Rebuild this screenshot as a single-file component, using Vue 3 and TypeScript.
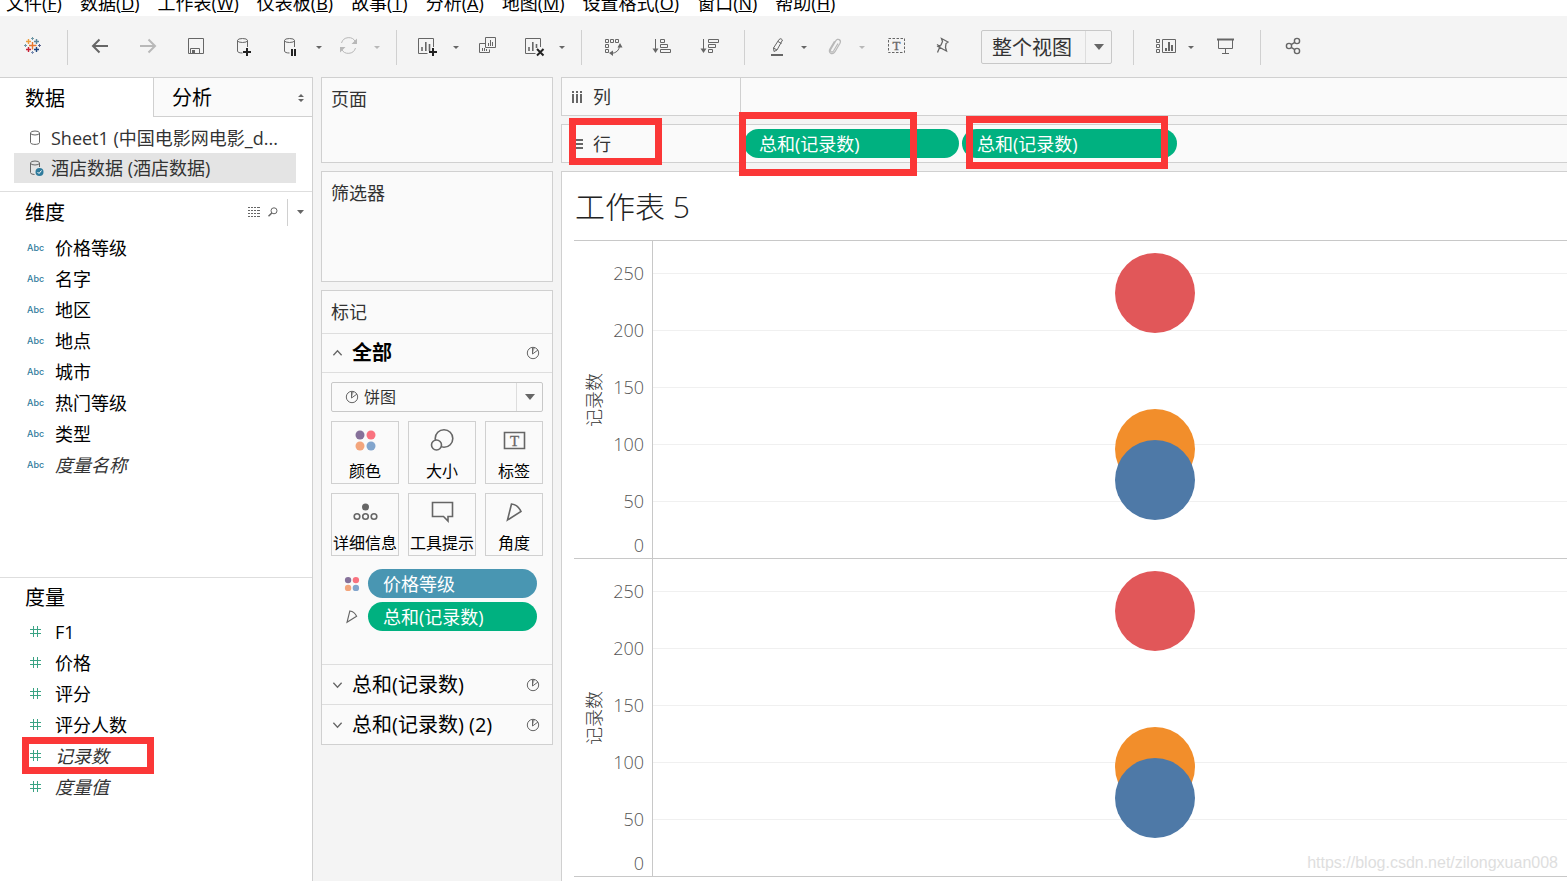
<script setup lang="ts">
import { ref } from 'vue'

interface Tool {
  icon: string
  label: string
  size: string
  menu?: boolean
  muted?: boolean
}

interface Field {
  name: string
  italic?: boolean
  marked?: boolean
}

const menus: [string, string][] = [
  ['文件', 'F'], ['数据', 'D'], ['工作表', 'W'], ['仪表板', 'B'], ['故事', 'T'],
  ['分析', 'A'], ['地图', 'M'], ['设置格式', 'O'], ['窗口', 'N'], ['帮助', 'H'],
]

const icons: Record<string, string> = {
  logo: `<g stroke-width="1.4"><path stroke="#e8762d" d="M15.500 7v7.500M12 10.500h7.500"/>
    <path stroke="#eb9c3c" d="M11.500 4v5M9 6.500h5"/><path stroke="#5b879b" d="M19.500 4v5M17 6.500h5"/>
    <path stroke="#c72035" d="M11.500 12v5M9 14.500h5"/><path stroke="#1f457e" d="M19.500 12v5M17 14.500h5"/></g>
    <g stroke-width="1"><path stroke="#7199a6" d="M15.500 2v3M14 3.500h3M8.500 9v3M7 10.500h3"/>
    <path stroke="#5c6692" d="M22.500 9v3M21 10.500h3"/><path stroke="#7b8fb3" d="M15.500 16v3M14 17.500h3"/></g>`,
  back: '<path stroke-width="2" d="M23 11H8M14.500 4.500 8 11l6.500 6.500"/>',
  forward: '<path stroke-width="2" d="M7 11h15M15.500 4.500 22 11l-6.500 6.500"/>',
  save: '<path d="M7.500 3.500h15v15h-15zM9.500 18.500v-5h9v5"/><path fill="currentColor" stroke="none" d="M11 15h3v3h-3z"/>',
  addData: `<path d="M8.500 5.500v10.500c0 1.300 2 2 5 2M18.500 5.500V12"/><ellipse cx="13.500" cy="5.500" rx="5" ry="2"/>
    <path stroke="#222" stroke-width="2" d="M18 13v8M14 17h8"/>`,
  pauseData: `<path d="M9.500 5.500v10.500c0 1.300 2 2 5 2M19.500 5.500V12"/><ellipse cx="14.500" cy="5.500" rx="5" ry="2"/>
    <path stroke="#222" stroke-width="2" d="M17 14v7M20 14v7"/>`,
  refresh: `<path d="M8.500 8a7.500 7.500 0 0 1 14-1M22.500 13a7.500 7.500 0 0 1-14 1"/>
    <path fill="currentColor" stroke="none" d="M24 3.500V9h-5.500zM7 17.500V12h5.500z"/>`,
  addSheet: `<path d="M21.500 12V3.500h-15v15h9"/><path stroke-width="1.600" d="M10 12v4M13.800 7v9M17.500 9v7"/>
    <path stroke="#222" stroke-width="2" d="M21 13v8M17 17h8"/>`,
  copySheet: `<path d="M13.500 2.500h10v10h-10zM13.500 8.500h-6v9h10v-3"/>
    <path d="M16.500 8v3M18.500 5v6M20.500 7v4M10.500 13v3M12.500 13v3M14.500 14v2"/>`,
  clearSheet: `<path d="M22.500 12V3.500h-15v15h10"/><path stroke-width="1.600" d="M11 12v4M14.800 7v9M18.500 9v4"/>
    <path stroke="#222" stroke-width="2" d="m19 14 6.500 6.500M25.500 14 19 20.500"/>`,
  swap: `<path d="M6.500 4.500h3v3h-3zM11.500 4.500h3v3h-3zM16.500 4.500h3v3h-3zM6.500 9.500h3v3h-3zM6.500 14.500h3v3h-3zM20.500 11q-.5 6.500-8 7.500"/>
    <path fill="currentColor" stroke="none" d="m21 8 2.500 4.500h-5zM10 18l4-2.500V21z"/>`,
  sortUp: `<path d="M8.500 4v11M13.500 4.500h4v3h-4zM13.500 9.500h7v3h-7zM13.500 14.500h10v3h-10z"/>
    <path fill="currentColor" stroke="none" d="M5.500 13.500h6L8.500 18z"/>`,
  sortDown: `<path d="M8.500 4v11M13.500 4.500h10v3h-10zM13.500 9.500h7v3h-7zM13.500 14.500h4v3h-4z"/>
    <path fill="currentColor" stroke="none" d="M5.500 13.500h6L8.500 18z"/>`,
  pen: `<path d="M11.500 13 17 4.500q2-2 3.500.5l-5.500 10-3 1.500zM11.500 13l3.500 2M16 6.500l3.500 2"/>
    <path stroke-width="2" d="M9 20h12"/>`,
  clip: `<path stroke-width="1.200" d="m20 8.500-4.500 7.500c-1.400 2-4 .600-2.800-1.600l5-8.500c1.800-3.300 6-.900 4.300 2.300l-5 8.500c-2.600 4-7.500 1-5-3l4.500-7.500"/>`,
  label: `<path stroke-dasharray="2.500 1.500" d="M8.500 3.500h16v14h-16z"/>
    <text x="16.500" y="15" text-anchor="middle" font-family="Liberation Serif, serif" font-size="13" fill="currentColor" stroke="currentColor" stroke-width=".3">T</text>`,
  pin: `<path stroke-width="1.300" d="m15.500 3.500 6.500 3.500-2 1.500-.500 4 1 3.500-8.500-4.500 3-1.500 1.500-3.500zM11 9.500l3 2-2.500 6"/>`,
  showMe: `<path d="M7.500 4.500h3v3h-3zM7.500 9.500h3v3h-3zM7.500 14.500h3v3h-3zM13.500 4.500h13v13h-13z"/>
    <path stroke-width="2" d="M17 13v3M20 7v9M23 10v6"/>`,
  present: '<path stroke-width="2" d="M8 4.500h17"/><path d="M9.500 5v8.500h14V5M16.500 13.500v5M13 18.500h7"/>',
  share: `<g stroke-width="1.400"><circle cx="11" cy="11" r="2.600"/><circle cx="19" cy="6" r="2.600"/>
    <circle cx="19" cy="16" r="2.600"/><path d="m13.200 9.700 3.600-2.300M13.200 12.300l3.600 2.300"/></g>`,
}

const groups: { kind: string; tools: Tool[]; fit?: boolean }[] = [
  { kind: 'brand', tools: [{ icon: 'logo', label: '开始页面', size: 'l' }] },
  {
    kind: 'wide',
    tools: [
      { icon: 'back', label: '撤消', size: 'l' },
      { icon: 'forward', label: '重做', size: 'l', muted: true },
      { icon: 'save', label: '保存', size: 'l' },
      { icon: 'addData', label: '新建数据源', size: 'l' },
      { icon: 'pauseData', label: '暂停自动更新', size: 'm', menu: true },
      { icon: 'refresh', label: '运行更新', size: 'm', menu: true, muted: true },
    ],
  },
  {
    kind: 'wide',
    tools: [
      { icon: 'addSheet', label: '新建工作表', size: 'm', menu: true },
      { icon: 'copySheet', label: '复制', size: 'l' },
      { icon: 'clearSheet', label: '清除工作表', size: 'm', menu: true },
    ],
  },
  {
    kind: 'sort',
    tools: [
      { icon: 'swap', label: '交换行和列', size: 'l' },
      { icon: 'sortUp', label: '升序排序', size: 'l' },
      { icon: 'sortDown', label: '降序排序', size: 'l' },
    ],
  },
  {
    kind: 'format',
    fit: true,
    tools: [
      { icon: 'pen', label: '突出显示', size: 's', menu: true },
      { icon: 'clip', label: '组成员', size: 'm', menu: true, muted: true },
      { icon: 'label', label: '显示标记标签', size: 'xl' },
      { icon: 'pin', label: '固定轴', size: 's' },
    ],
  },
  {
    kind: 'show',
    tools: [
      { icon: 'showMe', label: '显示卡', size: 's', menu: true },
      { icon: 'present', label: '演示模式', size: 'xl' },
    ],
  },
  { kind: 'last', tools: [{ icon: 'share', label: '共享', size: 'l' }] },
]

const dimensions: Field[] = [
  { name: '价格等级' }, { name: '名字' }, { name: '地区' }, { name: '地点' },
  { name: '城市' }, { name: '热门等级' }, { name: '类型' }, { name: '度量名称', italic: true },
]
const measures: Field[] = [
  { name: 'F1' }, { name: '价格' }, { name: '评分' }, { name: '评分人数' },
  { name: '记录数', italic: true, marked: true }, { name: '度量值', italic: true },
]

const dots = `<g stroke="none"><circle cx="10" cy="7" r="4.500" fill="#86719a"/><circle cx="21" cy="7" r="4.500" fill="#f9727f"/>
  <circle cx="10" cy="18" r="4.500" fill="#f3a57c"/><circle cx="21" cy="18" r="4.500" fill="#82a5cd"/></g>`
const wedge = '<path d="m12.500 4-4 16 13.500-8.500C20 7 17 4.500 12.500 4z"/>'

const markButtons = [
  { label: '颜色', art: dots },
  { label: '大小', art: '<circle cx="17" cy="10.500" r="8.800"/><circle cx="9.500" cy="17" r="5" fill="#fafafa"/>' },
  { label: '标签', art: '<path d="M5.500 4.500h20v16h-20z"/><text x="15.500" y="17.500" text-anchor="middle" font-family="Liberation Serif, serif" font-size="15" fill="#666" stroke="#666" stroke-width=".3">T</text>' },
  { label: '详细信息', art: '<circle cx="15.500" cy="7" r="3.500" fill="#666" stroke="none"/><circle cx="7" cy="16.500" r="2.800"/><circle cx="15.500" cy="16.500" r="2.800"/><circle cx="24" cy="16.500" r="2.800"/>' },
  { label: '工具提示', art: '<path d="M5.500 2.500h20v14H21v4.500L16.500 16.500h-11z"/>' },
  { label: '角度', art: wedge },
]

const axisMax = 278
const ticks = [250, 200, 150, 100, 50, 0]
const marks = [
  { value: 232, tone: 'red' },
  { value: 96, tone: 'orange' },
  { value: 68, tone: 'blue' },
]
const at = (v: number) => ({ bottom: `${(v / axisMax) * 100}%` })

const fit = ref('整个视图')
const markType = ref('饼图')
const pie = '<circle cx="7" cy="7" r="5.700"/><path fill="#aaa" d="M6.500 8V2L9 1.500M6.500 8l5.500-4"/>'
</script>

<template>
  <div class="app">
    <nav class="menubar">
      <a v-for="[name, key] in menus" :key="key" href="#">{{ name }}(<u>{{ key }}</u>)</a>
    </nav>

    <header class="toolbar">
      <div v-for="g in groups" :key="g.tools[0].icon" class="group" :class="g.kind">
        <template v-for="t in g.tools" :key="t.icon">
          <button class="tool" :class="[t.size, { muted: t.muted }]" :aria-label="t.label">
            <svg class="ico" viewBox="0 0 30 25" v-html="icons[t.icon]" />
          </button>
          <button v-if="t.menu" class="drop" :class="{ muted: t.muted }" :aria-label="t.label + '选项'">
            <svg viewBox="0 0 6 3"><path d="M0 0h6L3 3z" /></svg>
          </button>
        </template>
        <div v-if="g.fit" class="combo fit">
          <select v-model="fit" aria-label="适合">
            <option>整个视图</option>
          </select>
          <span class="arrow"><svg viewBox="0 0 10 6"><path d="M0 0h10L5 6z" /></svg></span>
        </div>
      </div>
    </header>

    <main class="workspace">
      <aside class="data">
        <div class="tabs">
          <button class="tab active">数据</button>
          <button class="tab">
            分析
            <svg viewBox="0 0 6 8"><path d="M0 3h6L3 0zM0 5h6L3 8z" /></svg>
          </button>
        </div>
        <ul class="sources">
          <li>
            <svg viewBox="0 0 16 16"><path d="M2.500 3v9.500c0 2.500 9 2.500 9 0V3" /><ellipse cx="7" cy="3" rx="4.500" ry="2" /></svg>
            Sheet1 (中国电影网电影_d...
          </li>
          <li class="current">
            <svg viewBox="0 0 16 16">
              <path d="M2.500 3v9.500q0 2 4 2M11.500 3v4" /><ellipse cx="7" cy="3" rx="4.500" ry="2" />
              <circle class="badge" cx="11.500" cy="12" r="4" /><path class="tick" d="m9.500 12 1.500 1.500 2.500-3" />
            </svg>
            酒店数据 (酒店数据)
          </li>
        </ul>

        <section class="fields">
          <div class="fields-head">
            <h2>维度</h2>
            <button class="mini" aria-label="查看数据">
              <svg width="12" height="10" viewBox="0 0 12 10"><path d="M0 .5h2M3 .5h2M6 .5h2M9 .5h3M0 3.500h2M3 3.500h2M6 3.500h2M9 3.500h3M0 6.500h2M3 6.500h2M6 6.500h2M9 6.500h3M0 9.500h2M3 9.500h2M6 9.500h2M9 9.500h3" /></svg>
            </button>
            <button class="mini" aria-label="查找字段">
              <svg width="10" height="10" viewBox="0 0 10 10"><circle cx="6" cy="3.800" r="3" /><path d="M3.800 6 .5 9.300" stroke-width="1.500" /></svg>
            </button>
            <button class="mini more" aria-label="更多">
              <svg class="solid" width="7" height="4" viewBox="0 0 7 4"><path d="M0 0h7L3.500 4z" /></svg>
            </button>
          </div>
          <ul>
            <li v-for="f in dimensions" :key="f.name" :class="{ italic: f.italic }"><span class="abc">Abc</span>{{ f.name }}</li>
          </ul>
        </section>

        <section class="fields">
          <div class="fields-head short"><h2>度量</h2></div>
          <ul>
            <li v-for="f in measures" :key="f.name" :class="{ italic: f.italic }">
              <span class="abc"><svg width="11" height="11" viewBox="0 0 11 11"><path d="M3.500 0v11M7.500 0v11M0 3.500h11M0 7.500h11" /></svg></span>{{ f.name }}
              <span v-if="f.marked" class="frame frame-field" />
            </li>
          </ul>
        </section>
      </aside>

      <div class="cards">
        <section class="card pages"><h3>页面</h3></section>
        <section class="card filters"><h3>筛选器</h3></section>
        <section class="card marks">
          <h3>标记</h3>
          <button class="layer all">
            <svg class="chev" viewBox="0 0 12 8"><path d="m1.500 6.500 4.500-5 4.500 5" /></svg>
            <span>全部</span>
            <svg class="pie" viewBox="0 0 14 14" v-html="pie" />
          </button>
          <div class="layer-body">
            <div class="combo type">
              <svg class="pie" viewBox="0 0 14 14" v-html="pie" />
              <select v-model="markType" aria-label="标记类型">
                <option>饼图</option>
              </select>
              <span class="arrow"><svg viewBox="0 0 10 6"><path d="M0 0h10L5 6z" /></svg></span>
            </div>
            <div class="mark-grid">
              <button v-for="b in markButtons" :key="b.label">
                <svg viewBox="0 0 31 25" v-html="b.art" />
                <span>{{ b.label }}</span>
              </button>
            </div>
            <div class="encodings">
              <svg viewBox="0 0 31 25" v-html="dots" />
              <button class="pill dimension">价格等级</button>
              <svg viewBox="0 0 31 25" v-html="wedge" />
              <button class="pill">总和(记录数)</button>
            </div>
          </div>
          <button v-for="l in ['总和(记录数)', '总和(记录数) (2)']" :key="l" class="layer">
            <svg class="chev" viewBox="0 0 12 8"><path d="m1.500 1.500 4.500 5 4.500-5" /></svg>
            <span>{{ l }}</span>
            <svg class="pie" viewBox="0 0 14 14" v-html="pie" />
          </button>
        </section>
      </div>

      <div class="sheet">
        <div class="shelf">
          <div class="shelf-name">
            <svg viewBox="0 0 12 12"><path d="M2 0v2M6 0v2M10 0v2M2 3v9M6 3v9M10 3v9" /></svg>列
          </div>
        </div>
        <div class="shelf">
          <div class="shelf-name">
            <svg viewBox="0 0 12 12"><path d="M0 2h2M0 6h2M0 10h2M3 2h9M3 6h9M3 10h9" /></svg>行
          </div>
          <div class="pills">
            <button class="pill">总和(记录数)</button>
            <button class="pill">总和(记录数)</button>
          </div>
          <span class="frame frame-rows" />
          <span class="frame frame-first" />
          <span class="frame frame-second" />
        </div>
        <section class="view">
          <h1>工作表 5</h1>
          <div class="chart">
            <div v-for="p in 2" :key="p" class="pane">
              <div class="axis">
                <span class="axis-title">记录数</span>
                <span v-for="t in ticks" :key="t" class="tick-label" :class="{ zero: t === 0 }" :style="at(t)">{{ t }}</span>
              </div>
              <div class="plot">
                <i v-for="t in ticks.slice(0, 5)" :key="t" class="grid-line" :style="at(t)" />
                <i v-for="m in marks" :key="m.tone" class="mark" :class="m.tone" :style="at(m.value)" />
              </div>
            </div>
          </div>
          <a class="source-link" href="#">https://blog.csdn.net/zilongxuan008</a>
        </section>
      </div>
    </main>
  </div>
</template>

<style>
body {
  margin: 0;
}
</style>

<style scoped>
.app {
  display: flex;
  flex-direction: column;
  min-height: 100vh;
  background: #f4f4f4;
  color: #000;
  font: 18px/24px "Open Sans", "Noto Sans CJK SC", sans-serif;
}
.app * {
  box-sizing: border-box;
}
button, select {
  font: inherit;
  color: inherit;
  border: 0;
  padding: 0;
  margin: 0;
  background: none;
}
ul, h1, h2, h3 {
  margin: 0;
  padding: 0;
  list-style: none;
  font-weight: 400;
}
svg {
  display: block;
  flex: none;
  fill: none;
  stroke: #666;
}

.menubar {
  display: flex;
  align-items: flex-end;
  gap: 18px;
  height: 16px;
  padding: 0 6px;
  overflow: hidden;
  background: #fff;
  line-height: 26px;
}
.menubar a {
  color: #000;
  text-decoration: none;
  white-space: nowrap;
}

.toolbar {
  display: flex;
  padding: 14px 0 12px;
  color: #666;
}
.group {
  display: flex;
  height: 35px;
  border-right: 1px solid #d0d0d0;
}
.brand {
  padding: 0 11px 0 8px;
}
.wide {
  padding: 0 12px 0 8px;
}
.sort {
  padding: 0 10px 0 8px;
}
.format {
  padding: 0 21px 0 12px;
}
.show {
  padding: 0 10px;
}
.last {
  padding: 0 8px;
  border: 0;
}
.tool {
  display: flex;
  align-items: center;
  justify-content: center;
}
.s { width: 40px; }
.m { width: 44px; }
.l { width: 48px; }
.xl { width: 52px; }
.ico {
  width: 30px;
  height: 25px;
  stroke: currentColor;
}
.drop {
  width: 14px;
  display: flex;
  align-items: center;
  justify-content: center;
}
.drop svg {
  width: 6px;
  height: 3px;
  fill: currentColor;
  stroke: none;
}
.muted {
  color: #b8b8b8;
}

.combo {
  position: relative;
  border: 1px solid #c8c8c8;
  border-radius: 2px;
  color: #333;
}
.combo select {
  width: 100%;
  height: 100%;
  appearance: none;
  outline: 0;
}
.arrow {
  position: absolute;
  top: 0;
  right: 0;
  bottom: 0;
  width: 26px;
  border-left: 1px solid #ddd;
  display: flex;
  align-items: center;
  justify-content: center;
  pointer-events: none;
}
.arrow svg {
  width: 10px;
  height: 6px;
  fill: #666;
  stroke: none;
}
.fit {
  width: 131px;
  height: 34px;
  margin-left: 20px;
  font-size: 20px;
}
.fit select {
  padding: 2px 0 0 10px;
}

.workspace {
  flex: 1;
  display: grid;
  grid-template-columns: 313px 232px minmax(0, 1fr);
  gap: 8px;
}

.data {
  display: grid;
  grid-template-rows: auto auto 386fr 304fr;
  background: #fff;
  border: solid #d0d0d0;
  border-width: 1px 1px 0 0;
}
.tabs {
  display: flex;
  font-size: 20px;
}
.tab {
  flex: 1;
  height: 39px;
  padding: 2px 8px 0 18px;
  display: flex;
  align-items: center;
  justify-content: space-between;
  background: #fafafa;
  border: solid #d0d0d0;
  border-width: 0 0 1px 1px;
}
.tab.active {
  flex: 0 0 153px;
  padding-left: 25px;
  background: #fff;
  border: 0;
}
.tab svg {
  width: 6px;
  height: 8px;
  fill: #666;
  stroke: none;
}
.sources {
  padding: 6px 16px 8px 14px;
  color: #333;
}
.sources li {
  display: flex;
  align-items: center;
  gap: 7px;
  height: 30px;
  padding-left: 14px;
  white-space: nowrap;
}
.sources svg {
  width: 16px;
  height: 16px;
}
.sources .current {
  background: #e4e4e4;
}
.badge {
  fill: #2f7b9c;
  stroke: none;
}
.tick {
  stroke: #fff;
}
.fields {
  border-top: 1px solid #dedede;
}
.fields-head {
  display: flex;
  align-items: center;
  height: 40px;
  padding-left: 25px;
}
.fields-head.short {
  height: 38px;
}
.fields-head h2 {
  flex: 1;
  padding-top: 2px;
  font-size: 20px;
}
.mini {
  height: 27px;
  padding: 0 4px;
  display: flex;
  align-items: center;
}
.mini.more {
  margin-left: 5px;
  padding: 0 8px 0 9px;
  border-left: 1px solid #d0d0d0;
}
.mini .solid {
  fill: #666;
  stroke: none;
}
.fields li {
  position: relative;
  display: flex;
  align-items: center;
  height: 31px;
  line-height: 22px;
}
.italic {
  font-style: italic;
  color: #333;
}
.abc {
  width: 55px;
  padding-left: 27px;
  color: #2f7b9c;
  font: 500 9px/12px Inter, sans-serif;
}
.abc svg {
  margin-left: 3px;
  stroke: #3aa384;
  shape-rendering: crispEdges;
}

.cards {
  display: flex;
  flex-direction: column;
  gap: 8px;
}
.card {
  background: #fafafa;
  border: 1px solid #d0d0d0;
}
.card h3 {
  height: 42px;
  padding: 9px 9px 0;
  font-size: 18px;
  color: #333;
}
.pages {
  height: 86px;
}
.filters {
  height: 111px;
}
.layer {
  display: flex;
  align-items: center;
  width: 100%;
  height: 40px;
  padding: 0 12px 0 10px;
  border-top: 1px solid #dedede;
  font-size: 20px;
}
.layer span {
  flex: 1;
  padding-left: 9px;
  text-align: left;
}
.layer.all {
  border-bottom: 1px solid #dedede;
  font-weight: 700;
}
.chev {
  width: 11px;
  height: 8px;
  stroke-width: 1.4;
}
.pie {
  width: 14px;
  height: 14px;
}
.layer-body {
  padding: 9px 9px 33px;
}
.type {
  height: 30px;
  font-size: 16px;
}
.type select {
  padding-left: 32px;
}
.type .pie {
  position: absolute;
  top: 7px;
  left: 13px;
}
.mark-grid {
  display: grid;
  grid-template-columns: 68px 68px 58px;
  justify-content: space-between;
  row-gap: 9px;
  margin-top: 9px;
}
.mark-grid button {
  height: 63px;
  display: flex;
  flex-direction: column;
  align-items: center;
  justify-content: space-between;
  padding: 6px 0 0;
  border: 1px solid #d0d0d0;
  font-size: 16px;
  white-space: nowrap;
}
.mark-grid svg {
  width: 31px;
  height: 25px;
  stroke-width: 1.6;
}
.encodings {
  display: grid;
  grid-template-columns: 22px 1fr;
  align-items: center;
  gap: 4px 5px;
  margin: 13px 6px 0 10px;
}
.encodings svg {
  width: 22px;
  height: 18px;
  stroke-width: 1.6;
}
.pill {
  height: 29px;
  padding: 0 15px;
  border-radius: 15px;
  background: #00b180;
  color: #fff;
  text-align: left;
  white-space: nowrap;
}
.pill.dimension {
  background: #4996b2;
}

.sheet {
  display: flex;
  flex-direction: column;
  gap: 8px;
}
.shelf {
  position: relative;
  display: flex;
  height: 39px;
  background: #fafafa;
  border: solid #d0d0d0;
  border-width: 1px 0 1px 1px;
  color: #333;
}
.shelf-name {
  display: flex;
  align-items: center;
  gap: 10px;
  width: 179px;
  padding-left: 9px;
  border-right: 1px solid #d0d0d0;
}
.shelf-name svg {
  width: 12px;
  height: 12px;
  stroke-width: 2;
}
.pills {
  display: flex;
  align-items: center;
  gap: 3px;
  padding-left: 3px;
}
.pills .pill {
  width: 215px;
}

/* Highlight frames laid over the controls */
.frame {
  position: absolute;
  z-index: 1;
  border: 7px solid #fb3737;
  pointer-events: none;
}
.frame-field {
  left: 22px;
  top: -3px;
  width: 132px;
  height: 37px;
}
.frame-rows {
  left: 7px;
  top: -7px;
  width: 93px;
  height: 47px;
}
.frame-first {
  left: 177px;
  top: -13px;
  width: 178px;
  height: 64px;
}
.frame-second {
  left: 404px;
  top: -9px;
  width: 202px;
  height: 53px;
}

.view {
  position: relative;
  flex: 1;
  display: flex;
  flex-direction: column;
  padding: 0 0 4px 12px;
  background: #fff;
  border: solid #d0d0d0;
  border-width: 1px 0 0 1px;
}
.view h1 {
  height: 68px;
  padding-left: 1px;
  font-size: 30px;
  font-weight: 300;
  line-height: 70px;
  color: #222;
}
.chart {
  flex: 1;
  display: flex;
  flex-direction: column;
  border-bottom: 1px solid #c8c8c8;
}
.pane {
  flex: 1;
  display: flex;
  min-height: 240px;
  border-top: 1px solid #c8c8c8;
}
.axis {
  position: relative;
  width: 79px;
  border-right: 1px solid #c8c8c8;
  font-weight: 300;
  color: #555;
}
.axis-title {
  position: absolute;
  top: 50%;
  left: 8px;
  width: 24px;
  color: #333;
  writing-mode: vertical-rl;
  text-orientation: sideways;
  transform: translateY(-50%) rotate(180deg);
}
.tick-label {
  position: absolute;
  right: 8px;
  margin-bottom: -12px;
}
.tick-label.zero {
  margin-bottom: 1px;
}
.plot {
  position: relative;
  flex: 1;
  overflow: hidden;
}
.grid-line {
  position: absolute;
  left: 0;
  right: 0;
  height: 1px;
  margin-bottom: -1px;
  background: #f0f0f0;
}
.mark {
  position: absolute;
  left: 54.9%;
  width: 80px;
  height: 80px;
  margin: 0 0 -40px -40px;
  border-radius: 50%;
}
.red { background: #e15759; }
.orange { background: #f28e2b; }
.blue { background: #4e79a7; }
.source-link {
  position: absolute;
  right: 9px;
  bottom: 6px;
  font-family: "Liberation Sans", sans-serif;
  font-size: 16px;
  color: #dedede;
  text-decoration: none;
}
</style>
